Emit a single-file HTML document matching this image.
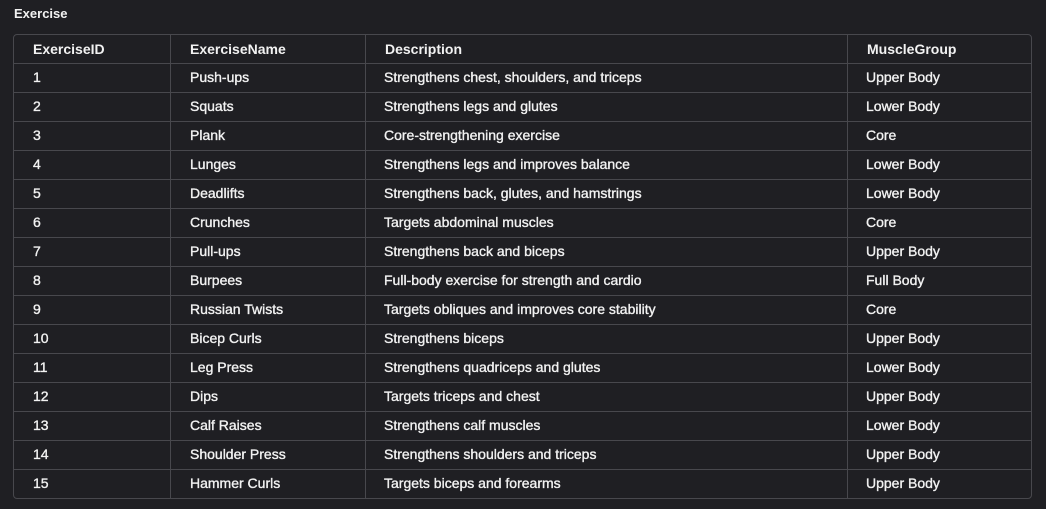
<!DOCTYPE html>
<html><head><meta charset="utf-8"><style>
html,body{margin:0;padding:0;background:#1f1f23;width:1046px;height:509px;overflow:hidden;font-family:"Liberation Sans",sans-serif;color:#f2f2f2}
.t{position:absolute;left:14px;top:6px;font-size:13px;font-weight:bold}
table{position:absolute;left:13px;top:34px;width:1019px;border-collapse:separate;border-spacing:0;border:1px solid #48484d;border-radius:4px;font-size:14px}
td,th{height:28px;padding:0 0 0 19px;text-align:left;border-right:1px solid #48484d;border-bottom:1px solid #48484d;white-space:nowrap}
td{-webkit-text-stroke:0.35px #f2f2f2;padding-bottom:2px;height:26px}
td:first-child{padding-left:19px}
td:nth-child(3),td:nth-child(4){padding-left:18px}
tr:last-child td{border-bottom:none}
td:last-child,th:last-child{border-right:none}
th{font-weight:bold}
</style></head><body>
<div class="t">Exercise</div>
<table>
<colgroup><col style="width:157px"><col style="width:195px"><col style="width:482px"><col></colgroup>
<tr><th>ExerciseID</th><th>ExerciseName</th><th>Description</th><th>MuscleGroup</th></tr>
<tr><td>1</td><td>Push-ups</td><td>Strengthens chest, shoulders, and triceps</td><td>Upper Body</td></tr>
<tr><td>2</td><td>Squats</td><td>Strengthens legs and glutes</td><td>Lower Body</td></tr>
<tr><td>3</td><td>Plank</td><td>Core-strengthening exercise</td><td>Core</td></tr>
<tr><td>4</td><td>Lunges</td><td>Strengthens legs and improves balance</td><td>Lower Body</td></tr>
<tr><td>5</td><td>Deadlifts</td><td>Strengthens back, glutes, and hamstrings</td><td>Lower Body</td></tr>
<tr><td>6</td><td>Crunches</td><td>Targets abdominal muscles</td><td>Core</td></tr>
<tr><td>7</td><td>Pull-ups</td><td>Strengthens back and biceps</td><td>Upper Body</td></tr>
<tr><td>8</td><td>Burpees</td><td>Full-body exercise for strength and cardio</td><td>Full Body</td></tr>
<tr><td>9</td><td>Russian Twists</td><td>Targets obliques and improves core stability</td><td>Core</td></tr>
<tr><td>10</td><td>Bicep Curls</td><td>Strengthens biceps</td><td>Upper Body</td></tr>
<tr><td>11</td><td>Leg Press</td><td>Strengthens quadriceps and glutes</td><td>Lower Body</td></tr>
<tr><td>12</td><td>Dips</td><td>Targets triceps and chest</td><td>Upper Body</td></tr>
<tr><td>13</td><td>Calf Raises</td><td>Strengthens calf muscles</td><td>Lower Body</td></tr>
<tr><td>14</td><td>Shoulder Press</td><td>Strengthens shoulders and triceps</td><td>Upper Body</td></tr>
<tr><td>15</td><td>Hammer Curls</td><td>Targets biceps and forearms</td><td>Upper Body</td></tr>
</table>
</body></html>
